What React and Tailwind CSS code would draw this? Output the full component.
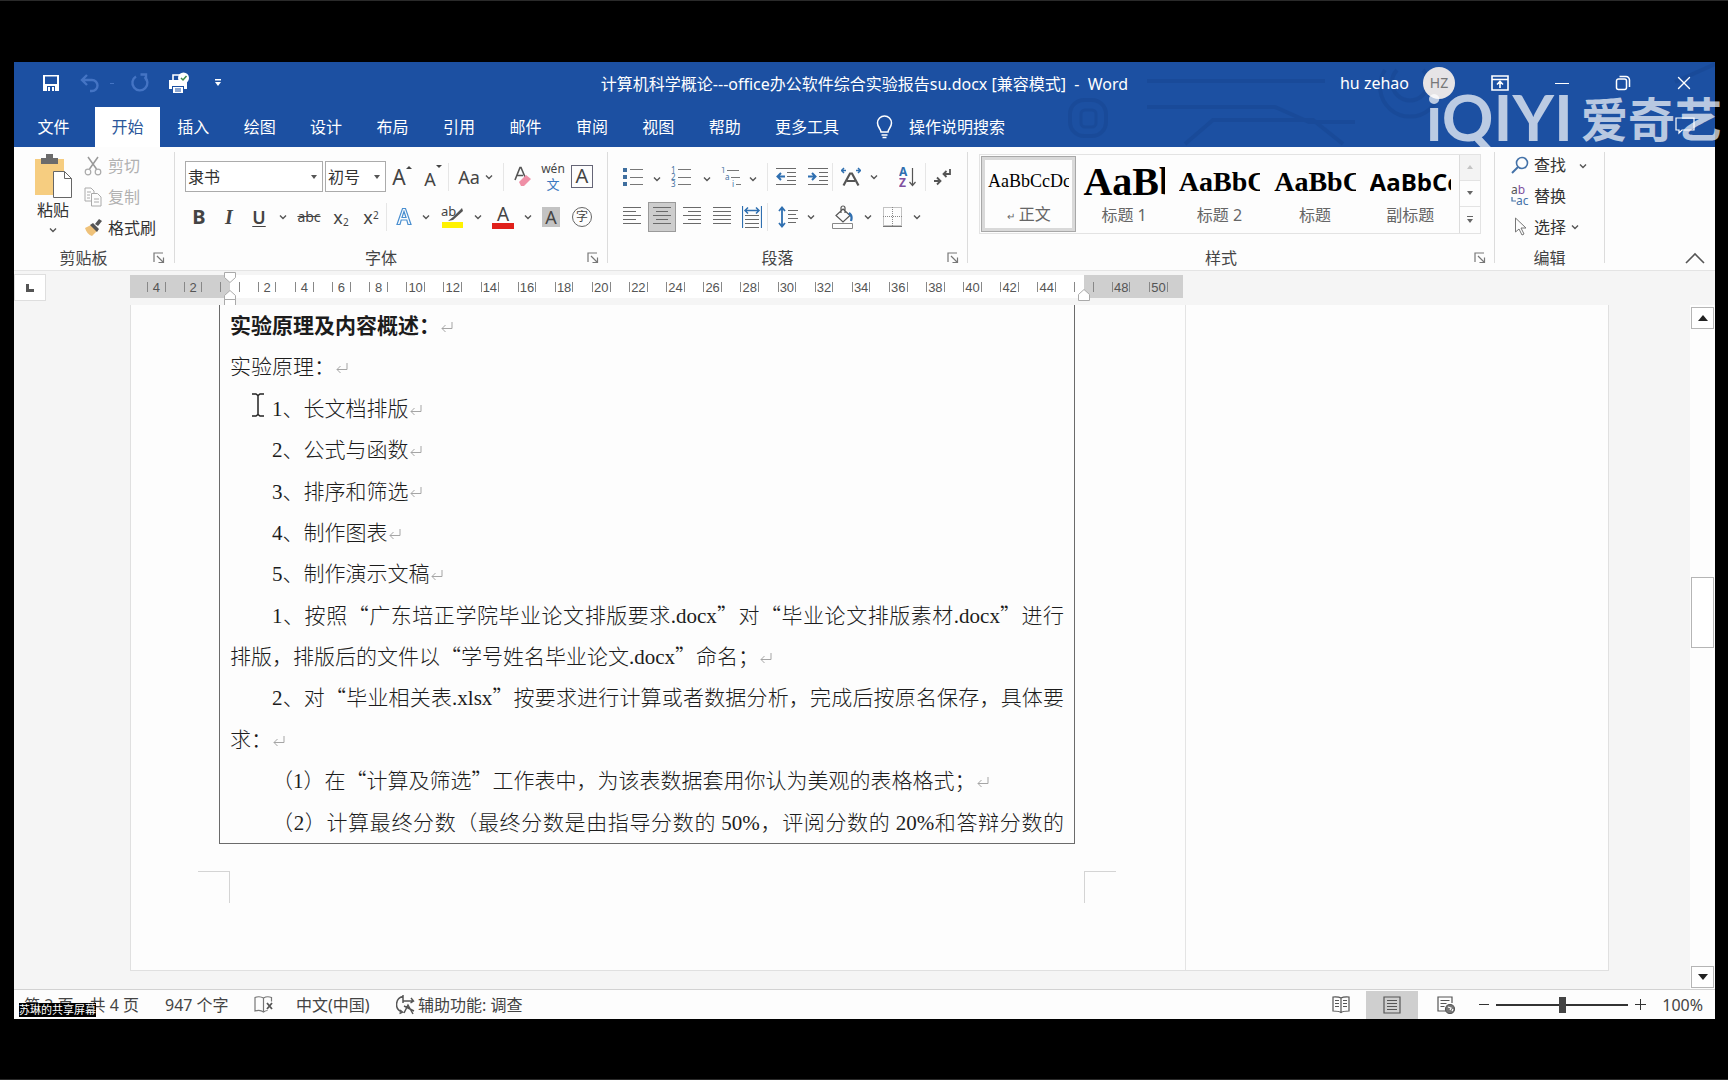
import { useState } from "react";
import { X } from "lucide-react";

const TABS = ["插入", "绘图", "设计", "布局", "引用", "邮件", "审阅", "视图", "帮助"];

const STYLES = [
    { name: "正文", mark: true, sample: "AaBbCcDc", cls: "font-['Liberation_Serif',serif] text-[18px]" },
    { name: "标题 1", sample: "AaBb", cls: "font-['Liberation_Serif',serif] font-bold text-[40px]" },
    { name: "标题 2", sample: "AaBbC", cls: "font-['Liberation_Serif',serif] font-bold text-[28px]" },
    { name: "标题", sample: "AaBbC", cls: "font-['Liberation_Serif',serif] font-bold text-[28px]" },
    { name: "副标题", sample: "AaBbCc", cls: "font-['Open_Sans',sans-serif] font-bold text-[24px]" },
];

const LINES = [
    { text: "实验原理及内容概述：", bold: true, mark: true },
    { text: "实验原理：", mark: true },
    { text: "1、长文档排版", indent: true, mark: true },
    { text: "2、公式与函数", indent: true, mark: true },
    { text: "3、排序和筛选", indent: true, mark: true },
    { text: "4、制作图表", indent: true, mark: true },
    { text: "5、制作演示文稿", indent: true, mark: true },
    { text: "1、按照“广东培正学院毕业论文排版要求.docx”对“毕业论文排版素材.docx”进行", indent: true, fill: true },
    { text: "排版，排版后的文件以“学号姓名毕业论文.docx”命名；", mark: true },
    { text: "2、对“毕业相关表.xlsx”按要求进行计算或者数据分析，完成后按原名保存，具体要", indent: true, fill: true },
    { text: "求：", mark: true },
    { text: "（1）在“计算及筛选”工作表中，为该表数据套用你认为美观的表格格式；", indent: true, mark: true },
    { text: "（2）计算最终分数（最终分数是由指导分数的 50%，评阅分数的 20%和答辩分数的", indent: true, fill: true },
];

function Svg({ w = 20, h = 20, children, className = "" }) {
    return (
        <svg width={w} height={h} viewBox={`0 0 ${w} ${h}`} fill="none" stroke="#555" strokeWidth="1.2" className={`shrink-0 ${className}`}>
            {children}
        </svg>
    );
}

function Chevron() {
    return (
        <Svg w={8} h={6} className="inline-block">
            <path d="M1 1.500l3 3 3-3" strokeWidth="1.400" />
        </Svg>
    );
}

function Drop({ label, className = "w-[10px]" }) {
    return (
        <button aria-label={label} className={`h-8 flex items-center justify-center shrink-0 ${className}`}>
            <Chevron />
        </button>
    );
}

function Tool({ label, className = "w-[30px]", children }) {
    return (
        <button aria-label={label} className={`h-8 flex items-center justify-center shrink-0 text-[#444] ${className}`}>
            {children}
        </button>
    );
}

function Sep({ className = "" }) {
    return <span className={`w-px h-7 bg-[#e6e6e6] shrink-0 ${className}`} />;
}

// horizontal text lines, each one given as [x1, x2]
function Lines({ rows, top = 1, step = 4 }) {
    return rows.map(([a, b], i) => <path key={i} d={`M${a} ${top + i * step}.5H${b}`} stroke="#6a6a6a" strokeWidth="1" />);
}

function Group({ title, launcher, className = "", children }) {
    return (
        <section className={`flex flex-col shrink-0 ${className}`}>
            <div className="flex-1 flex flex-col justify-center">{children}</div>
            <div className="h-6 flex items-center">
                <h2 className="flex-1 text-center text-base leading-6 text-[#444]">{title}</h2>
                {launcher && (
                    <button aria-label={`${title}设置`} className="w-5">
                        <Svg w={12} h={12}>
                            <path d="M1 10V1h9M4 4l6 6M10.500 5.500v5h-5" stroke="#777" />
                        </Svg>
                    </button>
                )}
            </div>
        </section>
    );
}

function Divider() {
    return <div className="w-px bg-[#dcdcdc] mt-[5px] mb-[7px] shrink-0" />;
}

function Combo({ label, value, className }) {
    return (
        <div className={`relative ${className}`}>
            <select aria-label={label} defaultValue={value} className="appearance-none w-full h-[31px] border border-[#ababab] bg-white pl-[2px] text-base leading-6 text-[#333]">
                <option>{value}</option>
            </select>
            <svg width="6" height="4" viewBox="0 0 6 4" className="absolute right-[6px] top-[14px] pointer-events-none">
                <path d="M0 0h6L3 4z" fill="#555" />
            </svg>
        </div>
    );
}

function TitleBar() {
    return (
        <div className="h-[42px] grid grid-cols-[1fr_auto_1fr] items-center text-white">
            <div className="flex items-center pl-[28px]">
                <button aria-label="保存" className="w-[18px]">
                    <svg width="18" height="18" viewBox="0 0 18 18">
                        <path d="M1 1h16v16H1z" fill="#fff" />
                        <path d="M3 2.500h12v7.500H3zM5 12h8v5H5z" fill="#1c50a2" />
                        <path d="M6 13h2v4H6zM10 13h2v4h-2z" fill="#fff" />
                    </svg>
                </button>
                <button aria-label="撤消" className="ml-5 w-5">
                    <Svg w={20} h={20}>
                        <path d="M7 2L2 7l5 5M2.500 7H12a5.500 5.500 0 010 11h-2" stroke="#4474c4" strokeWidth="2.400" />
                    </Svg>
                </button>
                <span className="ml-[10px] w-1 h-px bg-[#4474c4]" />
                <button aria-label="重复" className="ml-4 w-5">
                    <Svg w={20} h={20}>
                        <path d="M6 3.500A7.500 7.500 0 1014.500 4M10.500 1.500H16v6" stroke="#4474c4" strokeWidth="2.400" />
                    </Svg>
                </button>
                <button aria-label="打印预览" className="ml-[18px] w-6">
                    <svg width="22" height="22" viewBox="0 0 22 22">
                        <path d="M5 8V3h9v5" fill="none" stroke="#fff" strokeWidth="1.600" />
                        <path d="M1 8h18v9h-3v-3H4v3H1z" fill="#fff" />
                        <path d="M5 15h10v6H5z" fill="#fff" />
                        <path d="M7 17h6M7 19h6" stroke="#1c50a2" />
                        <circle cx="15.500" cy="6" r="5.500" fill="#fff" />
                        <path d="M13 6l2 2 3.500-4" fill="none" stroke="#3d8a4a" strokeWidth="1.500" />
                    </svg>
                </button>
                <button aria-label="自定义快速访问工具栏" className="ml-[22px] w-3">
                    <svg width="8" height="8" viewBox="0 0 8 8">
                        <path d="M1 0h6v1.500H1zM1 3h6L4 7z" fill="#fff" />
                    </svg>
                </button>
            </div>
            <h1 className="text-base leading-6 pt-[2px] whitespace-pre">计算机科学概论---office办公软件综合实验报告su.docx [兼容模式]{"  -  "}Word</h1>
            <div className="flex items-center justify-end">
                <span className="text-base leading-6">hu zehao</span>
                <span className="ml-[14px] w-8 h-8 rounded-full bg-[#e6e4e6] text-[#777] text-sm flex items-center justify-center">HZ</span>
                <button aria-label="功能区显示选项" className="ml-9">
                    <Svg w={18} h={16}>
                        <path d="M1 1h16v14H1zM1 4.500h16M9 13V7M6 9.500l3-3 3 3" stroke="#fff" strokeWidth="1.600" />
                    </Svg>
                </button>
                <button aria-label="最小化" className="ml-[46px] w-[14px] h-4 flex items-center">
                    <span className="w-[14px] h-px bg-white" />
                </button>
                <button aria-label="还原" className="ml-[46px]">
                    <Svg w={16} h={16}>
                        <path d="M1.500 6a2 2 0 012-2H9.500a2 2 0 012 2v6.500a2 2 0 01-2 2h-6a2 2 0 01-2-2zM4.500 1.500H11a3.500 3.500 0 013.500 3.500v7" stroke="#fff" strokeWidth="1.500" />
                    </Svg>
                </button>
                <button aria-label="关闭" className="ml-[42px] mr-5">
                    <X size={22} strokeWidth={1.5} />
                </button>
            </div>
        </div>
    );
}

function Circuit() {
    return (
        <svg width="660" height="85" viewBox="0 0 660 85" className="absolute right-0 top-0 opacity-30" fill="none" stroke="#133f86" strokeWidth="4">
            <rect x="15" y="38" width="36" height="36" rx="14" />
            <rect x="26" y="48" width="15" height="17" rx="4" strokeWidth="3" />
            <path d="M92 19H270M92 45H220L254 60H300M130 82l28-24H258l30 24" />
            <path d="M330 8a30 30 0 1050 0M342 8a18 18 0 1026 0M620 20l40-18" />
        </svg>
    );
}

function TabBar({ active, onSelect }) {
    const cls = (name) =>
        name === active ? "h-10 text-base leading-6 bg-white text-[#2b579a]" : "h-10 text-base leading-6 text-white";
    return (
        <nav className="flex items-end h-[43px] pl-[10px]">
            <button onClick={() => onSelect("文件")} className={`w-[71px] pr-3 ${cls("文件")}`}>文件</button>
            <button onClick={() => onSelect("开始")} className={`w-[65px] ${cls("开始")}`}>开始</button>
            <div className="grid grid-cols-9 w-[598px]">
                {TABS.map((t) => (
                    <button key={t} onClick={() => onSelect(t)} className={cls(t)}>{t}</button>
                ))}
            </div>
            <button onClick={() => onSelect("更多工具")} className={`w-[98px] ${cls("更多工具")}`}>更多工具</button>
            <button className="ml-5 h-10 flex items-center gap-4 text-white text-base leading-6">
                <Svg w={17} h={24}>
                    <path d="M5 17c0-3-3.500-4.500-3.500-9a7 7 0 0114 0c0 4.500-3.500 6-3.500 9zM5.500 20h6M6.500 22.500h4" stroke="#fff" strokeWidth="1.500" />
                </Svg>
                操作说明搜索
            </button>
        </nav>
    );
}

function Clipboard() {
    return (
        <Group title="剪贴板" launcher className="w-[160px] pr-px">
            <div className="flex pl-5">
                <button className="w-[38px] flex flex-col items-center pt-1">
                    <svg width="38" height="44" viewBox="0 0 38 44">
                        <path d="M1 5h29v36H1z" fill="#f6cd80" />
                        <path d="M7 4h5V0h7v4h5v6H7z" fill="#6b6b6b" />
                        <path d="M19.500 17.500h11l7 7v19h-18z" fill="#fff" stroke="#666" />
                        <path d="M30.500 17.500v7h7" fill="none" stroke="#666" />
                    </svg>
                    <span className="text-base leading-6 text-[#333]">粘贴</span>
                    <span className="leading-3"><Chevron /></span>
                </button>
                <div className="ml-3 flex flex-col">
                    <button disabled className="h-[31px] flex items-center gap-[6px] text-base leading-6 text-[#b1b1b1]">
                        <Svg w={18} h={20}>
                            <path d="M4 1l8.500 12M14 1L5.500 13" stroke="#999" strokeWidth="1.500" />
                            <circle cx="4" cy="16" r="2.800" stroke="#aaa" />
                            <circle cx="14" cy="16" r="2.800" stroke="#aaa" />
                        </Svg>
                        剪切
                    </button>
                    <button disabled className="h-[31px] flex items-center gap-[6px] text-base leading-6 text-[#b1b1b1]">
                        <Svg w={18} h={20}>
                            <path d="M7 14H1V1h6l3 3v2M7.500 6.500h6l3.500 3.500v9H7.500zM3 5h4M3 8h3M3 11h3M10 12h5M10 15h5" stroke="#aaa" strokeWidth="1" />
                        </Svg>
                        复制
                    </button>
                    <button className="h-[31px] flex items-center gap-[6px] text-base leading-6 text-[#333]">
                        <svg width="18" height="20" viewBox="0 0 18 20">
                            <path d="M1 10l6-3 6 6-5 5c-3-1-6-4-7-8z" fill="#efc27a" />
                            <path d="M6 7l3-2 6 6-2 3zM11 6l4-5 3 2-4 5z" fill="#555" />
                        </svg>
                        格式刷
                    </button>
                </div>
            </div>
        </Group>
    );
}

function FontGroup() {
    return (
        <Group title="字体" launcher className="w-[432px]">
            <div className="h-10 flex items-center pl-[10px]">
                <Combo label="字体" value="隶书" className="w-[138px]" />
                <Combo label="字号" value="初号" className="w-[61px] ml-[2px]" />
                <Tool label="增大字号" className="w-8">
                    <span className="text-[21px] leading-6">A</span>
                    <Svg w={6} h={5} className="self-start mt-1"><path d="M0 4l3-3 3 3z" fill="#444" stroke="none" /></Svg>
                </Tool>
                <Tool label="减小字号">
                    <span className="text-lg leading-6 pt-1">A</span>
                    <Svg w={6} h={5} className="self-start mt-1"><path d="M0 0h6L3 3z" fill="#444" stroke="none" /></Svg>
                </Tool>
                <Sep />
                <Tool label="更改大小写" className="w-9 pl-1 text-lg">Aa</Tool>
                <Drop label="更改大小写选项" className="w-2" />
                <Sep className="ml-[10px]" />
                <Tool label="清除格式" className="w-[38px]">
                    <Svg w={18} h={22}>
                        <path d="M1 14L6 1.500h1L11 11M3 9.500h6" strokeWidth="1.600" />
                        <path d="M5 16l7-7 5 4-7 7H7z" fill="#ef8fa6" stroke="none" />
                    </Svg>
                </Tool>
                <Tool label="拼音指南" className="w-[22px] flex-col">
                    <span className="text-[12px] leading-[14px]">wén</span>
                    <span className="text-[13px] leading-4 text-[#3a78c0]">文</span>
                </Tool>
                <Tool label="字符边框" className="w-9">
                    <span className="w-[22px] h-[23px] border border-[#667] text-xl leading-5">A</span>
                </Tool>
            </div>
            <div className="h-10 flex items-center pl-[9px]">
                <Tool label="加粗"><b className="text-xl leading-6">B</b></Tool>
                <Tool label="倾斜"><i className="text-xl leading-6 font-['Liberation_Serif',serif] font-bold">I</i></Tool>
                <Tool label="下划线"><u className="text-lg leading-6 font-semibold underline-offset-2">U</u></Tool>
                <Drop label="下划线选项" className="w-[18px]" />
                <Tool label="删除线" className="w-[34px]"><s className="text-sm leading-6">abc</s></Tool>
                <Tool label="下标"><span className="text-lg leading-6">x<sub className="text-[10px]">2</sub></span></Tool>
                <Tool label="上标"><span className="text-lg leading-6">x<sup className="text-[10px]">2</sup></span></Tool>
                <Sep />
                <Tool label="文本效果" className="w-[34px]">
                    <Svg w={16} h={19}>
                        <path d="M1 17.500L6.500 1.500h3L15 17.500h-3L10.800 13H5.200L4 17.500zM6 10.500h4L8 4.500z" stroke="#4a8fd0" />
                    </Svg>
                </Tool>
                <Drop label="文本效果选项" />
                <Tool label="突出显示" className="w-[42px]">
                    <Svg w={22} h={24}>
                        <path d="M1 17h21v6H1z" fill="#fff200" stroke="none" />
                        <text x="0" y="11" fontSize="13" fill="#444" stroke="none">ab</text>
                        <path d="M21 3l-9 9-5 4 5-1 10-9z" fill="#555" stroke="none" />
                    </Svg>
                </Tool>
                <Drop label="突出显示颜色" />
                <Tool label="字体颜色" className="w-[40px] flex-col">
                    <span className="text-[19px] leading-[18px]">A</span>
                    <span className="w-[22px] h-[6px] bg-[#e0201a]" />
                </Tool>
                <Drop label="字体颜色选项" />
                <Tool label="字符底纹" className="w-9">
                    <span className="w-[18px] h-5 bg-[#c3c3c3] text-lg leading-5">A</span>
                </Tool>
                <Tool label="带圈字符" className="w-[26px]">
                    <span className="w-5 h-5 rounded-full border border-[#666] text-[12px] leading-[18px]">字</span>
                </Tool>
            </div>
        </Group>
    );
}

function ParagraphGroup() {
    return (
        <Group title="段落" launcher className="w-[359px]">
            <div className="h-10 flex items-center pl-[9px]">
                <Tool label="项目符号" className="w-8">
                    <Svg w={20} h={20}>
                        <path d="M7 2.500h13M7 10.500h13M7 17.500h13" stroke="#777" />
                        <path d="M0 1h4v4H0zM0 8h4v4H0zM0 15h4v4H0z" fill="#3f6f9f" stroke="none" />
                    </Svg>
                </Tool>
                <Drop label="项目符号选项" className="w-4 pt-1" />
                <Tool label="编号" className="w-8">
                    <Svg w={20} h={22}>
                        <path d="M7 3.500h13M7 11.500h13M7 18.500h13" stroke="#777" />
                        <g fontSize="8" fill="#3f6f9f" stroke="none">
                            <text x="0" y="7">1</text>
                            <text x="0" y="14">2</text>
                            <text x="0" y="21">3</text>
                        </g>
                    </Svg>
                </Tool>
                <Drop label="编号选项" className="w-5 pt-1" />
                <Tool label="多级列表" className="w-7">
                    <Svg w={20} h={20}>
                        <path d="M6 3.500h12M10 10.500h9M15 17.500h5" stroke="#777" />
                        <g fontSize="8" fill="#3f6f9f" stroke="none">
                            <text x="0" y="6">1</text>
                            <text x="4" y="13">a</text>
                            <text x="11" y="20">i</text>
                        </g>
                    </Svg>
                </Tool>
                <Drop label="多级列表选项" className="w-4 pt-1" />
                <Sep className="ml-[6px]" />
                <Tool label="减少缩进" className="w-9">
                    <Svg w={20} h={20}>
                        <Lines rows={[[0, 20], [11, 20], [11, 20], [11, 20], [0, 20]]} />
                        <path d="M9 9.500H2M5 6L1.500 9.500 5 13" stroke="#2f6fb0" strokeWidth="2" />
                    </Svg>
                </Tool>
                <Tool label="增加缩进" className="w-7">
                    <Svg w={20} h={20}>
                        <Lines rows={[[0, 20], [11, 20], [11, 20], [11, 20], [0, 20]]} />
                        <path d="M0 9.500h7M4 6l3.500 3.500L4 13" stroke="#2f6fb0" strokeWidth="2" />
                    </Svg>
                </Tool>
                <Sep />
                <Tool label="中文版式" className="w-9">
                    <Svg w={20} h={20}>
                        <path d="M0 3.500h5M3 1L.5 3.500 3 6M20 3.500h-5M17 1l2.500 2.500L17 6" stroke="#2f6fb0" strokeWidth="1.500" />
                        <path d="M2.500 18.500L9 6.500h2l6.500 12M6 14h8" strokeWidth="2.200" />
                    </Svg>
                </Tool>
                <Drop label="中文版式选项" />
                <Tool label="排序" className="w-[46px] pl-3">
                    <Svg w={18} h={22}>
                        <g fontSize="12" fontWeight="bold" stroke="none">
                            <text x="0" y="10" fill="#2f6fb0">A</text>
                            <text x="0" y="21" fill="#80509f">Z</text>
                        </g>
                        <path d="M13.500 2v17M10.500 16l3 3.500 3-3.500" />
                    </Svg>
                </Tool>
                <Sep />
                <Tool label="显示编辑标记" className="w-8">
                    <Svg w={18} h={18}>
                        <path d="M17 1v5h-6M13.500 3L10.500 6l3 3M1 13h6M4 9.500L7.500 13 4 16.500" strokeWidth="1.800" />
                    </Svg>
                </Tool>
            </div>
            <div className="h-10 flex items-center pl-[9px]">
                <Tool label="左对齐">
                    <Svg w={18} h={21}><Lines rows={[[0, 18], [0, 13], [0, 18], [0, 13], [0, 18]]} /></Svg>
                </Tool>
                <Tool label="居中" className="w-[30px]">
                    <span className="w-7 h-[30px] border border-[#9a9a9a] bg-[#cdcdcd] flex items-center justify-center">
                        <Svg w={18} h={21}><Lines rows={[[0, 18], [3, 15], [0, 18], [3, 15], [0, 18]]} /></Svg>
                    </span>
                </Tool>
                <Tool label="右对齐">
                    <Svg w={18} h={21}><Lines rows={[[0, 18], [5, 18], [0, 18], [5, 18], [0, 18]]} /></Svg>
                </Tool>
                <Tool label="两端对齐">
                    <Svg w={18} h={21}><Lines rows={[[0, 18], [0, 18], [0, 18], [0, 18], [0, 18]]} /></Svg>
                </Tool>
                <Tool label="分散对齐">
                    <Svg w={20} h={22}>
                        <path d="M.5 0v22M19.500 0v22" stroke="#2f6fb0" />
                        <Lines rows={[[3, 17], [3, 17], [3, 17], [3, 17]]} top={9} />
                        <path d="M3 4.500h14M6 1.500l-3 3 3 3M14 1.500l3 3-3 3" stroke="#2f6fb0" strokeWidth="1.500" />
                    </Svg>
                </Tool>
                <Sep />
                <Tool label="行距" className="w-10">
                    <Svg w={20} h={22}>
                        <path d="M4 2v18M1 5l3-3.500L7 5M1 17l3 3.500L7 17" stroke="#2f6fb0" strokeWidth="1.800" />
                        <Lines rows={[[10, 20], [10, 18], [10, 20], [10, 18]]} top={4} />
                    </Svg>
                </Tool>
                <Drop label="行距选项" className="w-[6px]" />
                <Tool label="底纹" className="w-[50px] pl-2">
                    <Svg w={22} h={24}>
                        <path d="M.5 18.500h20v5H.5z" stroke="#888" strokeWidth="1" />
                        <path d="M11 4l7 6.500-7 6.500-7-6.500zM9 8V3a2 2 0 014 0v5" />
                        <path d="M17 8c3 2 3 5 2 8" stroke="#2f6fb0" strokeWidth="2.200" />
                    </Svg>
                </Tool>
                <Drop label="底纹颜色" className="w-2" />
                <Tool label="边框" className="w-10">
                    <Svg w={19} h={20}>
                        <path d="M.5.5h18v18H.5zM9.500 0v19M0 9.500h19" stroke="#888" strokeWidth="1" strokeDasharray="1 1" />
                        <path d="M0 19.500h19" stroke="#777" strokeWidth="1" />
                    </Svg>
                </Tool>
                <Drop label="边框选项" className="w-[10px]" />
            </div>
        </Group>
    );
}

function StylesGroup() {
    const [picked, setPicked] = useState(0);
    return (
        <Group title="样式" launcher className="w-[526px]">
            <div className="ml-[11px] mr-[13px] mb-[6px] h-20 flex border border-[#e3e3e3]">
                <div className="flex-1 grid grid-cols-5 p-px">
                    {STYLES.map((s, i) => (
                        <button
                            key={s.name}
                            onClick={() => setPicked(i)}
                            className={i === picked ? "border-4 border-[#d9d9d9] outline outline-[#a8a8a8] -outline-offset-1 px-[3px] overflow-hidden" : "px-[7px] py-1 overflow-hidden"}
                        >
                            <span className={`block h-[42px] leading-[42px] text-left text-black overflow-hidden whitespace-nowrap ${s.cls}`}>{s.sample}</span>
                            <span className="block text-base leading-6 text-[#666] whitespace-nowrap">
                                {s.mark && <span className="text-[10px] pr-1">↵</span>}
                                {s.name}
                            </span>
                        </button>
                    ))}
                </div>
                <div className="w-[21px] flex flex-col border-l border-[#dcdcdc]">
                    <button aria-label="上一行" className="flex-1 flex items-center justify-center bg-[#f3f3f3]">
                        <svg width="6" height="4" viewBox="0 0 6 4"><path d="M0 4h6L3 0z" fill="#c4c4c4" /></svg>
                    </button>
                    <button aria-label="下一行" className="flex-1 flex items-center justify-center border-y border-[#e3e3e3]">
                        <svg width="6" height="4" viewBox="0 0 6 4"><path d="M0 0h6L3 4z" fill="#666" /></svg>
                    </button>
                    <button aria-label="其他样式" className="flex-1 flex items-center justify-center">
                        <svg width="6" height="7" viewBox="0 0 6 7"><path d="M0 0h6v1H0zM0 3h6L3 7z" fill="#666" /></svg>
                    </button>
                </div>
            </div>
        </Group>
    );
}

function EditGroup() {
    return (
        <Group title="编辑" className="w-[109px]">
            <div className="pl-4 pb-[2px] flex flex-col text-base leading-6 text-[#333]">
                <button className="h-[31px] flex items-center gap-[5px]">
                    <Svg w={18} h={18}>
                        <circle cx="11" cy="7" r="5.500" stroke="#4472a8" strokeWidth="1.600" />
                        <path d="M7 11l-6 6" stroke="#4472a8" strokeWidth="2" />
                    </Svg>
                    查找
                    <span className="pl-2"><Chevron /></span>
                </button>
                <button className="h-[31px] flex items-center gap-[5px]">
                    <Svg w={18} h={22}>
                        <g fontSize="12" stroke="none">
                            <text x="0" y="9" fill="#555">a<tspan fill="#80509f">b</tspan></text>
                            <text x="5" y="20" fill="#4472a8">ac</text>
                        </g>
                        <path d="M1 12v4h4" stroke="#4472a8" />
                    </Svg>
                    替换
                </button>
                <button className="h-[31px] flex items-center gap-[5px]">
                    <Svg w={18} h={20}>
                        <path d="M4.500 1v14l3.500-3 3 6 2-1-3-6h5z" stroke="#777" strokeWidth="1" />
                    </Svg>
                    选择
                    <Chevron />
                </button>
            </div>
        </Group>
    );
}

function Ribbon() {
    return (
        <div className="h-[123px] flex bg-[#fdfdfd]">
            <Clipboard />
            <Divider />
            <FontGroup />
            <Divider />
            <ParagraphGroup />
            <Divider />
            <StylesGroup />
            <Divider />
            <EditGroup />
            <Divider />
            <div className="flex-1 flex items-end justify-end pr-[10px] pb-[6px]">
                <button aria-label="折叠功能区">
                    <Svg w={20} h={12}><path d="M1 11l9-9 9 9" strokeWidth="1.600" /></Svg>
                </button>
            </div>
        </div>
    );
}

function Cell({ n }) {
    return (
        <span className="grow-2 basis-0 flex justify-center">
            <span className="w-1/2 h-[10px] border-x border-[#888] text-center leading-[11px]">{n}</span>
        </span>
    );
}

function HalfCell() {
    return (
        <span className="grow basis-0 flex justify-center">
            <span className="w-px h-[10px] bg-[#888]" />
        </span>
    );
}

function Ruler() {
    const marks = Array.from({ length: 22 }, (_, i) => 2 * (i + 1));
    return (
        <div className="h-[35px] flex bg-[#f5f5f5] border-t border-[#e4e4e4]">
            <button aria-label="制表符" className="mt-[3px] w-8 h-[27px] bg-white border border-[#dedede] flex items-center justify-center">
                <svg width="8" height="8" viewBox="0 0 8 8"><path d="M0 0h3v5h5v3H0z" fill="#555" /></svg>
            </button>
            <div className="relative mt-1 ml-[84px] h-[23px] flex text-[13px] text-[#555] font-['Liberation_Sans',sans-serif]">
                <div className="w-[100px] flex items-center bg-[#cfcfcf] pl-2">
                    <Cell n="4" />
                    <Cell n="2" />
                    <HalfCell />
                </div>
                <div className="w-[854px] flex items-center bg-white">
                    <HalfCell />
                    {marks.map((n) => <Cell key={n} n={n} />)}
                    <HalfCell />
                </div>
                <div className="w-[99px] flex items-center bg-[#cfcfcf] pr-[6px]">
                    <HalfCell />
                    <Cell n="48" />
                    <Cell n="50" />
                </div>
                {/* indent markers */}
                <svg width="12" height="34" viewBox="0 0 12 34" className="absolute left-[94px] -top-[3px]" fill="#fff" stroke="#aaa">
                    <path d="M.5.5h11v5L6 10.500.5 5.500zM.5 33.500h11v-6H.5zM.5 27.500v-4L6 18.500l5.500 5v4z" />
                </svg>
                <svg width="12" height="12" viewBox="0 0 12 12" className="absolute left-[948px] top-[14px]" fill="#fff" stroke="#aaa">
                    <path d="M.5 11.500v-6L6 .5l5.500 5v6z" />
                </svg>
            </div>
        </div>
    );
}

function ReturnMark() {
    return (
        <svg width="12" height="11" viewBox="0 0 12 11" className="inline-block ml-px" fill="none" stroke="#a5a5a5">
            <path d="M11 0v6.500H1M4.500 3L1 6.500 4.500 10" />
        </svg>
    );
}

// Latin letters and digits are set in the Times-like face, the rest in the CJK one
function Mixed({ text }) {
    return text.split(/([A-Za-z0-9.%]+)/).map((part, i) =>
        i % 2 ? <span key={i} className="font-['Liberation_Serif',serif] font-normal">{part}</span> : part
    );
}

function Page() {
    return (
        <main className="flex-1 flex ml-[116px] mr-[81px] mb-[18px] bg-[#fdfdfd] border-r border-b border-l border-[#e0e0e0]">
            <div className="w-[1055px] shrink-0 border-r border-[#e4e4e4]">
                <div className="ml-[88px] w-[856px] h-[539px] px-[10px] border-x border-b border-[#6b6b6b] grid auto-rows-fr text-[21px] text-[#1c1c1c]">
                    {LINES.map((l, i) => (
                        <p
                            key={i}
                            className={`leading-[38px] whitespace-nowrap ${l.bold ? "font-bold" : "font-light"} ${l.indent ? "indent-[42px]" : ""} ${l.fill ? "[text-align-last:justify]" : ""}`}
                        >
                            <Mixed text={l.text} />
                            {l.mark && <ReturnMark />}
                        </p>
                    ))}
                </div>
                <div className="mt-[27px] ml-[67px] w-[918px] flex justify-between">
                    <span className="w-8 h-8 border-t border-r border-[#d4d4d4]" />
                    <span className="w-8 h-8 border-t border-l border-[#d4d4d4]" />
                </div>
            </div>
        </main>
    );
}

function ScrollBar() {
    return (
        <div className="w-[25px] flex flex-col items-center bg-[#fdfdfd] pt-[2px] pb-px">
            <button aria-label="向上滚动" className="w-[23px] h-[22px] border border-[#b5b5b5] bg-white flex items-center justify-center">
                <svg width="10" height="6" viewBox="0 0 10 6"><path d="M0 6h10L5 0z" fill="#222" /></svg>
            </button>
            <div className="grow-[248] w-[23px]" />
            <div className="w-[23px] h-[71px] border border-[#b5b5b5] bg-white" />
            <div className="grow-[318] w-[23px]" />
            <button aria-label="向下滚动" className="w-[23px] h-[22px] border border-[#b5b5b5] bg-white flex items-center justify-center">
                <svg width="10" height="6" viewBox="0 0 10 6"><path d="M0 0h10L5 6z" fill="#222" /></svg>
            </button>
        </div>
    );
}

function StatusBar() {
    const [zoom, setZoom] = useState(100);
    return (
        <footer className="relative h-[30px] flex items-center bg-[#fdfdfd] border-t border-[#d2d2d2] text-base leading-6 text-[#444]">
            <span className="pl-[10px] w-[151px] whitespace-pre">第 2 页，共 4 页</span>
            <span className="w-[89px]">947 个字</span>
            <button aria-label="校对" className="w-[42px]">
                <Svg w={20} h={18}>
                    <path d="M9.500 2.500V16M9.500 2C7 .5 3 .5 1 1.500V15c3-1 6-1 8.500 1 1.500-1 3-1.500 4-1.500M9.500 2C12 .5 15 .5 17.500 1.500v4" stroke="#777" />
                    <path d="M13 7l5 6M18 7l-5 6" strokeWidth="1.800" />
                </Svg>
            </button>
            <span className="w-[100px]">中文(中国)</span>
            <button className="flex items-center gap-[2px]">
                <Svg w={20} h={20}>
                    <path d="M7 1.500a8 8 0 00-2 15M4 15l2.500 2-3 1.500M7 0v8M7 6h10M15 3l2.500 3-3 2M8 18l4-8 5 9M8 11l10 5" strokeWidth="1.500" />
                </Svg>
                辅助功能: 调查
            </button>
            <div className="ml-auto flex items-center pr-3">
                <button aria-label="阅读视图" className="w-[50px] h-[28px] flex items-center justify-center">
                    <Svg w={18} h={18}>
                        <path d="M9 2v15M9 2C7 .8 4 .8 1 1v14c3 0 6 0 8 1.500C11 15 14 15 17 15V1c-3-.2-6-.2-8 1M3 4.500h4M3 7.500h4M3 10.500h4M11 4.500h4M11 7.500h4M11 10.500h4" />
                    </Svg>
                </button>
                <button aria-label="页面视图" className="w-[52px] h-[28px] flex items-center justify-center bg-[#cfcfcf]">
                    <Svg w={18} h={18}>
                        <path d="M1 1h16v16H1zM4 4.500h10M4 7.500h10M4 10.500h10M4 13.500h10" />
                    </Svg>
                </button>
                <button aria-label="Web 版式视图" className="w-[56px] h-[28px] flex items-center justify-center">
                    <Svg w={18} h={18}>
                        <path d="M9 15H1V1h14v6M3.500 4.500h9M3.500 7.500h6M3.500 10.500h4" />
                        <circle cx="13" cy="13" r="4.500" fill="#777" />
                        <path d="M11 11l3 1-1 2M15 15l1-2" stroke="#fff" />
                    </Svg>
                </button>
                <button aria-label="缩小" onClick={() => setZoom(Math.max(10, zoom - 10))} className="ml-[2px] w-[16px] flex justify-center">
                    <span className="w-[10px] h-px bg-[#333] my-2" />
                </button>
                <input
                    type="range"
                    aria-label="缩放"
                    min="10"
                    max="190"
                    value={zoom}
                    onChange={(e) => setZoom(Number(e.target.value))}
                    className="ml-1 w-[132px] h-4 appearance-none bg-transparent [&::-webkit-slider-runnable-track]:h-[2px] [&::-webkit-slider-runnable-track]:bg-[#333] [&::-webkit-slider-thumb]:appearance-none [&::-webkit-slider-thumb]:w-[7px] [&::-webkit-slider-thumb]:h-4 [&::-webkit-slider-thumb]:-mt-[7px] [&::-webkit-slider-thumb]:bg-[#444]"
                />
                <button aria-label="放大" onClick={() => setZoom(Math.min(190, zoom + 10))} className="ml-1 w-4 flex justify-center">
                    <Svg w={11} h={11}><path d="M5.500 0v11M0 5.500h11" stroke="#333" strokeWidth="1" /></Svg>
                </button>
                <span className="ml-[14px]">{zoom}%</span>
            </div>
            <span className="absolute left-[5px] top-[13px] h-[14px] bg-black text-white text-[11px] leading-[14px] whitespace-nowrap">苏琳的共享屏幕</span>
        </footer>
    );
}

export default function App() {
    const [tab, setTab] = useState("开始");
    return (
        <div lang="zh-CN" className="relative min-h-screen flex flex-col bg-black pt-[61px] pr-[13px] pb-[60px] pl-[14px] border-y border-[#2a2a2a] overflow-hidden font-['Noto_Sans','Noto_Sans_CJK_SC',sans-serif]">
            <header className="relative bg-[#1c50a2]">
                <Circuit />
                <div className="relative">
                    <TitleBar />
                    <TabBar active={tab} onSelect={setTab} />
                </div>
                <button aria-label="批注" className="absolute right-[20px] top-[55px]">
                    <Svg w={20} h={18}><path d="M1 1h18v12H7l-3 3v-3H1z" stroke="#fff" /></Svg>
                </button>
            </header>
            <Ribbon />
            <Ruler />
            <div className="relative flex-1 flex bg-[#f5f5f5] font-['Noto_Sans_CJK_SC',sans-serif]">
                <Page />
                <ScrollBar />
                {/* text cursor */}
                <svg width="12" height="24" viewBox="0 0 12 24" className="absolute left-[238px] top-[88px]" fill="none" stroke="#222" strokeWidth="1.500">
                    <path d="M0 1h4l2 1.500L8 1h4M6 2v20M0 23h4l2-1.500L8 23h4" />
                </svg>
            </div>
            <StatusBar />
            {/* watermark */}
            <div className="absolute right-[6px] top-[86px] flex items-center gap-2 leading-[60px] text-white/70 pointer-events-none whitespace-nowrap">
                <span className="text-[64px] font-['Lato',sans-serif] font-bold">iQIYI</span>
                <span className="text-[47px] font-['Noto_Sans_CJK_SC',sans-serif] font-bold">爱奇艺</span>
            </div>
        </div>
    );
}
